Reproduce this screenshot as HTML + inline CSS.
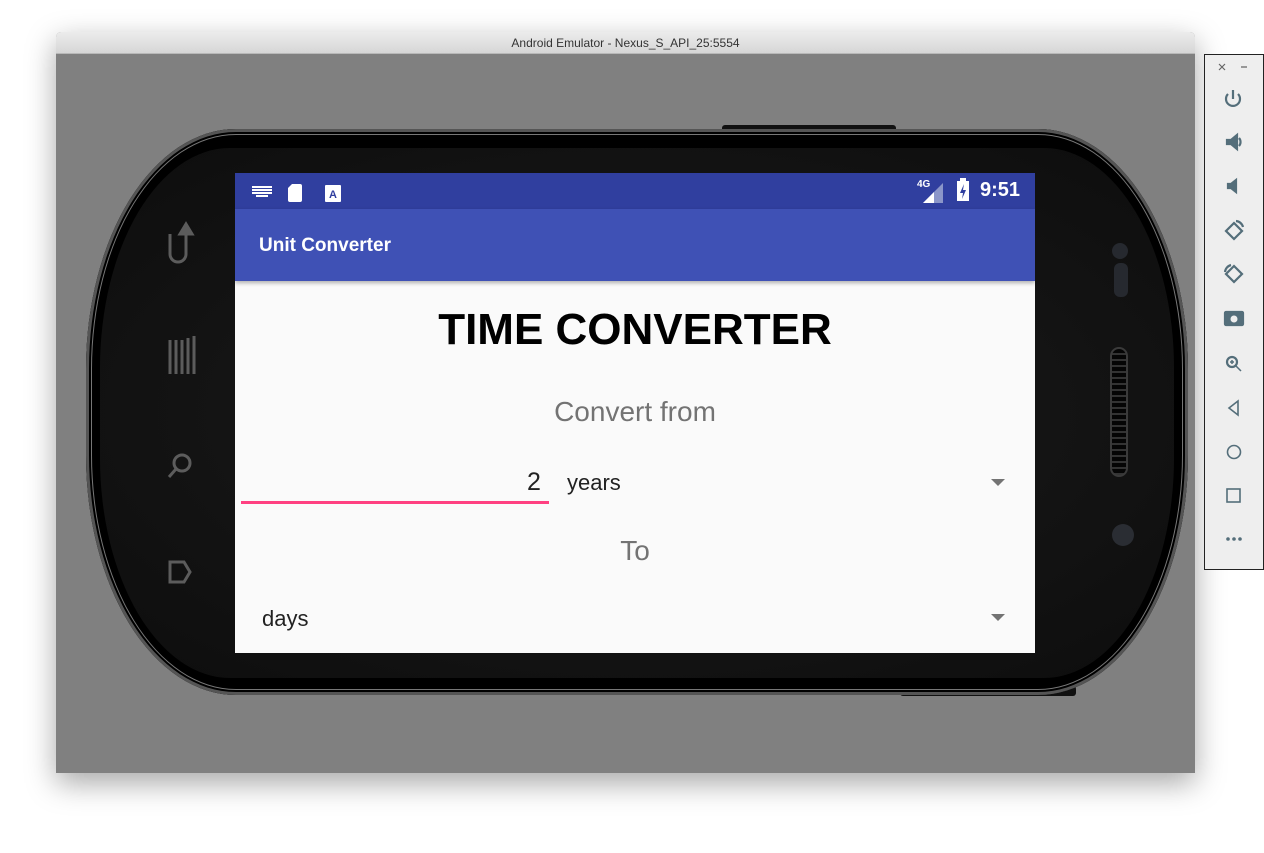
<!DOCTYPE html>
<html><head><meta charset="utf-8"><style>
body{margin:0;width:1264px;height:853px;background:#fff;position:relative;overflow:hidden;font-family:"Liberation Sans",Roboto,sans-serif}
.abs{position:absolute}
</style></head><body>
<div class="abs" style="left:56px;top:32px;width:1139px;height:741px;box-shadow:0 10px 30px rgba(0,0,0,.35);border-radius:5px 5px 0 0;overflow:hidden;background:#808080">
  <div class="abs" style="left:0;top:0;width:1139px;height:21px;background:linear-gradient(#ececec,#d6d6d6);border-bottom:1px solid #b8b8b8;text-align:center;font-size:12px;line-height:22px;color:#333">Android Emulator - Nexus_S_API_25:5554</div>
</div>
<div class="abs" style="left:722px;top:125px;width:174px;height:10px;background:#111;border-radius:3px"></div>
<div class="abs" style="left:900px;top:686px;width:176px;height:10px;background:#111;border-radius:3px"></div>
<div class="abs" style="left:86px;top:129px;width:1102px;height:566px;background:#000;border-radius:150px/240px;box-shadow:inset 0 0 0 3px #555,inset 0 0 0 5px #000,inset 0 0 0 6px #777"></div>
<div class="abs" style="left:100px;top:148px;width:1074px;height:530px;background:radial-gradient(ellipse at 50% 50%,#1c1c1c,#0d0d0d);border-radius:130px/220px"></div>
<svg class="abs" style="left:160px;top:220px" width="40" height="390" viewBox="0 0 40 390" fill="none" stroke="#5c5c5c" stroke-width="3">
<path d="M10 14v20a8 8 0 0 0 16 0V12"/><path d="M20 14l6-10 6 10z" fill="#5c5c5c"/>
<path d="M10 120v34M16 120v34M22 120v34M28 118v36M34 116v38" />
<circle cx="22" cy="243" r="8"/><path d="M16 249l-7 8"/>
<path d="M10 342h14l6 10-6 10H10z"/>
</svg>
<div class="abs" style="left:1112px;top:243px;width:16px;height:16px;border-radius:50%;background:#26292f"></div>
<div class="abs" style="left:1114px;top:263px;width:14px;height:34px;border-radius:6px;background:#26292f"></div>
<div class="abs" style="left:1110px;top:347px;width:18px;height:130px;border-radius:9px;background:repeating-linear-gradient(#050505 0 4px,#333 4px 6px);border:2px solid #3a3a3a;box-sizing:border-box"></div>
<div class="abs" style="left:1112px;top:524px;width:22px;height:22px;border-radius:50%;background:#2a2d33"></div>
<div class="abs" style="left:235px;top:173px;width:800px;height:480px;background:#fafafa;overflow:hidden">
  <div class="abs" style="left:0;top:0;width:800px;height:36px;background:#303f9f"></div>
  <svg class="abs" style="left:15px;top:8px" width="100" height="22" viewBox="0 0 100 22">
    <g fill="#fff"><rect x="2" y="5" width="20" height="2"/><rect x="2" y="8" width="20" height="2"/><rect x="2" y="11" width="20" height="2"/><rect x="6" y="14" width="12" height="2"/>
    <path d="M42 3h8a2 2 0 0 1 2 2v14a2 2 0 0 1-2 2H40a2 2 0 0 1-2-2V7z"/>
    <rect x="75" y="4" width="16" height="17" rx="1"/></g>
    <text x="79" y="17" font-size="11" font-weight="bold" fill="#303f9f" font-family="Liberation Sans">A</text>
  </svg>
  <div class="abs" style="left:682px;top:6px;font-size:10px;color:#fff;font-weight:bold">4G</div>
  <svg class="abs" style="left:686px;top:10px" width="24" height="20"><path d="M22 0v20H2z" fill="#8b96c9"/><path d="M13 9v11H2z" fill="#fff"/></svg>
  <svg class="abs" style="left:721px;top:5px" width="14" height="24"><rect x="4" y="0" width="6" height="3" fill="#fff"/><rect x="1" y="3" width="12" height="20" fill="#fff"/><path d="M8 6l-4 9h3l-1 6 4-9H7z" fill="#303f9f"/></svg>
  <div class="abs" style="left:745px;top:6px;font-size:20px;color:#fff;font-weight:bold">9:51</div>
  <div class="abs" style="left:0;top:36px;width:800px;height:72px;background:#3f51b5;box-shadow:0 2px 4px rgba(0,0,0,.3)"></div>
  <div class="abs" style="left:24px;top:62px;font-size:19px;color:#fff;font-weight:bold">Unit Converter</div>
  <div class="abs" style="left:0;top:132px;width:800px;text-align:center;font-size:44px;font-weight:bold;color:#000">TIME CONVERTER</div>
  <div class="abs" style="left:0;top:223px;width:800px;text-align:center;font-size:28px;color:#737373">Convert from</div>
  <div class="abs" style="left:292px;top:295px;font-size:25px;color:#222">2</div>
  <div class="abs" style="left:6px;top:328px;width:308px;height:3px;background:#ff4081"></div>
  <div class="abs" style="left:332px;top:297px;font-size:22px;color:#222">years</div>
  <svg class="abs" style="left:756px;top:306px" width="14" height="8"><path d="M0 0h14L7 7z" fill="#737373"/></svg>
  <div class="abs" style="left:0;top:362px;width:800px;text-align:center;font-size:28px;color:#737373">To</div>
  <div class="abs" style="left:27px;top:433px;font-size:22px;color:#222">days</div>
  <svg class="abs" style="left:756px;top:441px" width="14" height="8"><path d="M0 0h14L7 7z" fill="#737373"/></svg>
</div>
<div class="abs" style="left:1204px;top:54px;width:58px;height:514px;background:#eee;border:1px solid #222"></div>
<svg class="abs" style="left:1205px;top:55px" width="58" height="514" viewBox="0 0 58 514" fill="none" stroke="#546e7a" stroke-width="2.2">
<path d="M14 9l6 6M20 9l-6 6M36 12h6" stroke="#666" stroke-width="1.2"/>
<path d="M23 39a7 7 0 1 0 10 0M28 35v9"/>
<path d="M22 85h4l6-5v14l-6-5h-4z" fill="#546e7a"/><path d="M34 83a6 6 0 0 1 0 8"/>
<path d="M23 129h3l5-4v12l-5-4h-3z" fill="#546e7a"/>
<path d="M29 168l8 8-8 8-8-8z"/><path d="M31 166a8 8 0 0 1 7 6"/>
<path d="M29 211l8 8-8 8-8-8z"/><path d="M20 217a8 8 0 0 1 6-7"/>
<rect x="20" y="257" width="18" height="13" rx="1" fill="#546e7a"/><circle cx="29" cy="264" r="3.5" fill="#eee" stroke="none"/>
<circle cx="27" cy="307" r="5"/><path d="M31 311l5 5M25 307h4M27 305v4" stroke-width="1.5"/>
<path d="M33 346l-9 7 9 7z" stroke-width="1.6"/>
<circle cx="29" cy="397" r="6.5" stroke-width="1.6"/>
<rect x="22" y="434" width="13" height="13" stroke-width="1.6"/>
<g fill="#546e7a" stroke="none"><circle cx="23" cy="484" r="1.8"/><circle cx="29" cy="484" r="1.8"/><circle cx="35" cy="484" r="1.8"/></g>
</svg>
</body></html>
